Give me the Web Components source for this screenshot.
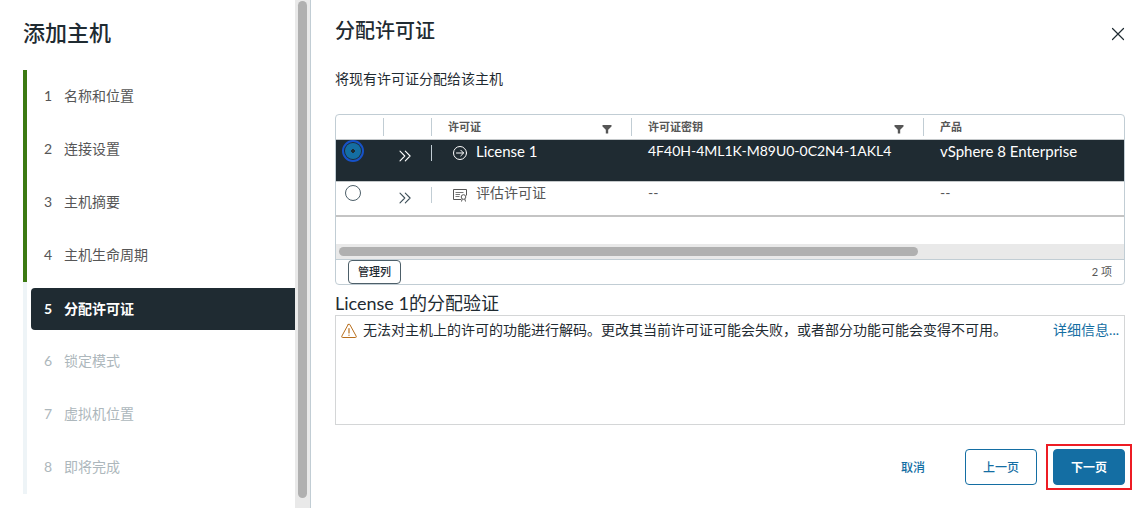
<!DOCTYPE html>
<html lang="zh-CN">
<head>
<meta charset="utf-8">
<title>添加主机</title>
<style>
  html, body { margin: 0; }
  body {
    --ink: #1f2b32;
    --muted: #565656;
    --action: #146ea3;
    --line: #c1cdd4;
    --track: #e9e9e9;
    --thumb: #b0b0b0;
    background: #fff;
    color: var(--ink);
    font: 14px/24px Lato, "Noto Sans CJK SC", sans-serif;
  }
</style>
</head>
<body>
<add-host-wizard>
  <wizard-nav slot="nav" heading="添加主机">
    <wizard-step number="1" state="done">名称和位置</wizard-step>
    <wizard-step number="2" state="done">连接设置</wizard-step>
    <wizard-step number="3" state="done">主机摘要</wizard-step>
    <wizard-step number="4" state="done">主机生命周期</wizard-step>
    <wizard-step number="5" state="current">分配许可证</wizard-step>
    <wizard-step number="6" state="todo">锁定模式</wizard-step>
    <wizard-step number="7" state="todo">虚拟机位置</wizard-step>
    <wizard-step number="8" state="todo">即将完成</wizard-step>
  </wizard-nav>
  <wizard-page heading="分配许可证">
    <span slot="description">将现有许可证分配给该主机</span>
    <license-grid></license-grid>
    <validation-panel>
      <span slot="heading">License 1的分配验证</span>
      <span slot="message">无法对主机上的许可的功能进行解码。更改其当前许可证可能会失败，或者部分功能可能会变得不可用。</span>
    </validation-panel>
    <wizard-button slot="actions" kind="link">取消</wizard-button>
    <wizard-button slot="actions" kind="outline">上一页</wizard-button>
    <wizard-button slot="actions" kind="primary" highlighted>下一页</wizard-button>
  </wizard-page>
</add-host-wizard>

<script>
class ShadowElement extends HTMLElement {
  constructor() {
    super();
    this.attachShadow({ mode: 'open' });
  }
  connectedCallback() {
    this.shadowRoot.innerHTML = this.render();
  }
}

customElements.define('add-host-wizard', class extends ShadowElement {
  render() {
    return `
      <style>
        :host { display: grid; grid-template-columns: 311px minmax(0, 1fr); min-height: 100vh; }
      </style>
      <slot name="nav"></slot>
      <slot></slot>`;
  }
});

customElements.define('wizard-nav', class extends ShadowElement {
  render() {
    return `
      <style>
        :host { display: flex; box-sizing: border-box; border-right: 1px solid var(--line); }
        nav { flex: 1; padding: 18px 0 12px 23px; }
        h1 { margin: 0 0 22px; font-size: 22px; line-height: 30px; font-weight: 500; }
        .track { box-sizing: border-box; width: 15px; padding: 1px 3px 10px; display: flex; background: var(--track); }
        .thumb { flex: 1; border-radius: 5px; background: var(--thumb); }
      </style>
      <nav><h1>${this.getAttribute('heading')}</h1><slot></slot></nav>
      <div class="track"><div class="thumb"></div></div>`;
  }
});

customElements.define('wizard-step', class extends ShadowElement {
  render() {
    const state = this.getAttribute('state');
    return `
      <style>
        :host { display: flex; align-items: center; box-sizing: border-box; height: 53px; padding-left: 4px; border-left: 4px solid #eef4f7; }
        :host([state="done"]) { border-color: #3c7a12; }
        button { flex: 1; display: flex; align-items: center; height: 42px; padding: 0 0 2px 13px; border: 0; border-radius: 4px 0 0 4px;
          background: none; color: var(--muted); font: inherit; text-align: left; }
        :host([state="current"]) button { padding-bottom: 0; background: var(--ink); color: #fff; font-weight: 700; }
        :host([state="todo"]) button { color: #adb7bc; }
        .number { width: 20px; }
      </style>
      <button type="button" ${state === 'todo' ? 'disabled' : ''} ${state === 'current' ? 'aria-current="step"' : ''}>
        <span class="number">${this.getAttribute('number')}</span><slot></slot>
      </button>`;
  }
});

customElements.define('wizard-page', class extends ShadowElement {
  render() {
    return `
      <style>
        :host { display: block; padding: 16px 23px 20px 24px; }
        header { display: flex; justify-content: space-between; align-items: flex-start; }
        h2 { margin: 0; font-size: 20px; line-height: 28px; font-weight: 500; }
        .close { display: flex; margin-top: 10px; padding: 0; border: 0; background: none; color: var(--ink); }
        p { margin: 23px 0; }
        footer { display: flex; justify-content: flex-end; gap: 16px; margin-top: 24px; }
      </style>
      <header>
        <h2>${this.getAttribute('heading')}</h2>
        <button class="close" type="button" aria-label="关闭">
          <svg width="14" height="16" viewBox="0 0 14 16" fill="none" stroke="currentColor" stroke-width="1.2" stroke-linecap="round"><path d="M1.5 2.5l11 11M12.5 2.5l-11 11"/></svg>
        </button>
      </header>
      <p><slot name="description"></slot></p>
      <slot></slot>
      <footer><slot name="actions"></slot></footer>`;
  }
});

customElements.define('license-grid', class extends ShadowElement {
  render() {
    const filter = label => `
      <button class="filter" type="button" aria-label="${label}">
        <svg width="10" height="10" viewBox="0 0 10 10" fill="currentColor"><path d="M.5 1h9v1.500L6.200 5.800V9.500H3.800V5.800L.5 2.500z"/></svg>
      </button>`;
    const expand = `
      <button class="expand" type="button" aria-label="展开">
        <svg width="16" height="16" viewBox="0 0 16 16" fill="none" stroke="currentColor" stroke-width="1.1" stroke-linecap="round" stroke-linejoin="round"><path d="M3 3.200L7.800 8l-4.800 4.800M8.300 3.200L13.100 8l-4.800 4.800"/></svg>
      </button>`;
    return `
      <style>
        :host { display: block; border: 1px solid var(--line); border-radius: 4px; overflow: hidden; }
        .viewport { min-height: 129px; }
        table { width: 100%; table-layout: fixed; border-collapse: separate; border-spacing: 0; }
        .narrow { width: 48px; } .name { width: 200px; } .key { width: 292px; }
        th, td { box-sizing: border-box; padding: 0 0 0 16px; text-align: left; border-bottom: 1px solid #c4c8ca; position: relative; }
        th { height: 25px; color: var(--muted); font-size: 11px; line-height: 16px; font-weight: 700; }
        th:not(:last-child)::after, td.split::after { content: ""; position: absolute; right: 0; top: 3px; width: 1px; height: 18px; background: var(--line); }
        td.split::after { top: 5px; height: 16px; }
        .heading { display: flex; justify-content: space-between; align-items: center; padding-right: 20px; }
        .filter { display: flex; padding: 3px 0 0; border: 0; background: none; color: var(--muted); }
        td { height: 42px; vertical-align: top; font-size: 15px; line-height: 22px; color: var(--muted); }
        tr:last-child td { height: 35px; border-bottom: 2px solid #c4c4c4; font-size: 14px; }
        .selected td { background: var(--ink); color: #fff; }
        .selected td.code { font-size: 14px; }
        td.pick { padding: 3px 0 0 9px; }
        input { appearance: none; display: block; box-sizing: border-box; width: 16px; height: 16px; margin: 0; border: 1px solid #4d5f69; border-radius: 50%; background: #fff; }
        input:checked { border: 0; background: radial-gradient(circle, var(--ink) 0 2px, var(--action) 2px); outline: 2px solid #1652c8; outline-offset: 1px; }
        .expand { display: flex; margin: 8px 0 0 -3px; padding: 0; border: 0; background: none; color: #3d4f59; }
        .selected .expand { color: #fff; }
        .label { display: flex; gap: 8px; padding-left: 4px; }
        .label svg { margin-top: 5px; }
        .track { padding: 3px; background: var(--track); border-bottom: 1px solid var(--line); }
        .thumb { width: 74%; height: 9px; border-radius: 5px; background: var(--thumb); }
        footer { display: flex; justify-content: space-between; align-items: center; padding: 0 12px; color: var(--muted); font-size: 11px; }
        .columns { box-sizing: border-box; height: 24px; padding: 0 9px; border: 1px solid #4d5f69; border-radius: 4px; background: #fff; color: var(--ink); font: inherit; font-weight: 500; line-height: 22px; }
      </style>
      <div class="viewport">
        <table>
          <colgroup><col class="narrow"><col class="narrow"><col class="name"><col class="key"><col></colgroup>
          <thead>
            <tr>
              <th></th><th></th>
              <th><div class="heading">许可证${filter('筛选许可证')}</div></th>
              <th><div class="heading">许可证密钥${filter('筛选许可证密钥')}</div></th>
              <th>产品</th>
            </tr>
          </thead>
          <tbody>
            <tr class="selected">
              <td class="pick"><input type="radio" name="license" aria-label="License 1" checked></td>
              <td class="split">${expand}</td>
              <td><div class="label">
                <svg width="16" height="16" viewBox="0 0 16 16" fill="none" stroke="currentColor" stroke-linecap="round" stroke-linejoin="round"><circle cx="8" cy="8" r="6.500"/><path d="M4.500 8h7M8.800 5.200L11.600 8l-2.800 2.800"/></svg>
                <span>License 1</span></div></td>
              <td class="code">4F40H-4ML1K-M89U0-0C2N4-1AKL4</td>
              <td>vSphere 8 Enterprise</td>
            </tr>
            <tr>
              <td class="pick"><input type="radio" name="license" aria-label="评估许可证"></td>
              <td class="split">${expand}</td>
              <td><div class="label">
                <svg width="16" height="16" viewBox="0 0 16 16" fill="none" stroke="currentColor"><path d="M9 12.500H1.500v-10h13v6"/><path d="M3.500 5.500h8M3.500 7.500h4.500M3.500 9.500h4" stroke-width=".8"/><circle cx="11.500" cy="10" r="2.300"/><path d="M10.200 12L9.500 14.500M12.800 12l.7 2.500"/></svg>
                <span>评估许可证</span></div></td>
              <td>--</td>
              <td>--</td>
            </tr>
          </tbody>
        </table>
      </div>
      <div class="track"><div class="thumb"></div></div>
      <footer><button class="columns" type="button">管理列</button><span>2 项</span></footer>`;
  }
});

customElements.define('validation-panel', class extends ShadowElement {
  render() {
    return `
      <style>
        :host { display: block; margin-top: 6px; }
        h3 { margin: 0; font-size: 18px; line-height: 24px; font-weight: 400; }
        .box { box-sizing: border-box; display: flex; align-items: flex-start; min-height: 110px; padding: 2px 5px; border: 1px solid #d4d6d7; }
        svg { flex: none; margin: 5px 6px 0 0; }
        .message { flex: 1; }
        a { color: var(--action); text-decoration: none; }
      </style>
      <h3><slot name="heading"></slot></h3>
      <div class="box">
        <svg width="16" height="16" viewBox="0 0 16 16" fill="none" stroke="#b86e1c" stroke-linecap="round" stroke-linejoin="round"><path d="M7.200 1.500L.8 13.200q-.5 1.300.9 1.300h12.600q1.400 0 .9-1.300L8.800 1.500q-.8-1-1.600 0z"/><path d="M8 5.500v4.500M8 12v.3" stroke-width="1.200"/></svg>
        <span class="message"><slot name="message"></slot></span>
        <a href="#details">详细信息...</a>
      </div>`;
  }
});

customElements.define('wizard-button', class extends ShadowElement {
  render() {
    return `
      <style>
        :host { display: block; position: relative; }
        button { box-sizing: border-box; min-width: 72px; height: 36px; padding: 1px 16px 0; border: 1px solid var(--action); border-radius: 4px;
          background: #fff; color: var(--action); font: inherit; font-size: 12px; font-weight: 500; line-height: 33px; }
        :host([kind="link"]) button { border-color: transparent; }
        :host([kind="primary"]) button { background: var(--action); color: #fff; font-weight: 700; }
        :host([highlighted])::after { content: ""; position: absolute; inset: -5px -7px; border: 2px solid #ed1c24; pointer-events: none; }
      </style>
      <button type="button"><slot></slot></button>`;
  }
});
</script>
</body>
</html>
